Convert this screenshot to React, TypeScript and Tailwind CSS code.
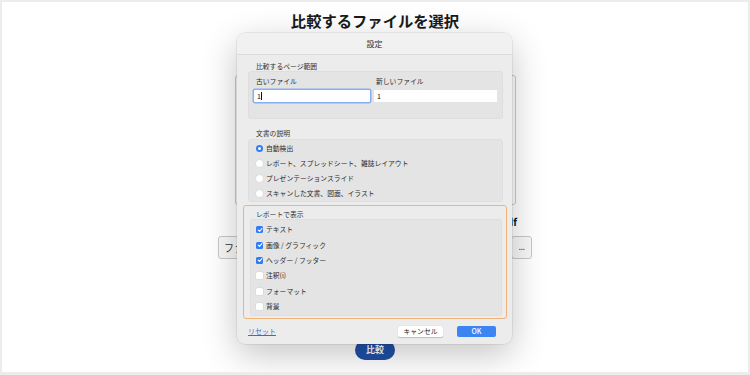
import React from "react";

const F = "[font-family:'Noto_Sans_CJK_JP','Noto_Sans',sans-serif]";

function Radio({ on, label }: { on?: boolean; label: string }) {
  return (
    <div className="flex h-[15px] items-center pl-[7px]">
      {on ? (
        <span className="flex h-[7px] w-[7px] items-center justify-center rounded-full bg-[#2f7cf6]">
          <span className="h-[2.5px] w-[2.5px] rounded-full bg-white" />
        </span>
      ) : (
        <span className="h-[7px] w-[7px] rounded-full bg-white shadow-[0_0_0_0.5px_#d4d4d4]" />
      )}
      <span className="ml-[3px] text-[6.8px] leading-[9px] text-[#2a2a2a]">{label}</span>
    </div>
  );
}

function Check({ on, label }: { on?: boolean; label: string }) {
  return (
    <div className="flex h-[15.4px] items-center pl-[5px]">
      {on ? (
        <span className="flex h-[7px] w-[7px] items-center justify-center rounded-[1.5px] bg-[#2f7cf6]">
          <svg width="6" height="6" viewBox="0 0 10 10">
            <path d="M2 5.2 L4.2 7.4 L8.2 2.6" fill="none" stroke="white" strokeWidth="1.8" strokeLinecap="round" strokeLinejoin="round" />
          </svg>
        </span>
      ) : (
        <span className="h-[7px] w-[7px] rounded-[1.5px] bg-white shadow-[0_0_0_0.5px_#d4d4d4]" />
      )}
      <span className="ml-[3px] text-[6.8px] leading-[9px] text-[#2a2a2a]">{label}</span>
    </div>
  );
}

export default function App() {
  return (
    <div className={`relative h-[375px] w-[750px] overflow-hidden border-2 border-b-[3px] border-[#ececec] bg-white ${F}`}>
      {/* background page */}
      <div className="flex flex-col items-center">
        <h1 className="mt-[8px] text-[15.3px] font-bold leading-[20px] text-[#1a1a1a]">比較するファイルを選択</h1>
        <div className="mt-[45px] h-[130px] w-[281px] rounded-[3px] border border-[#c9c9c9] bg-white" />
        <div className="mt-[11px] w-[284px] text-right text-[10px] font-bold leading-[12px] text-[#111]">比較対象.pdf</div>
        <div className="mt-[8px] flex w-[314px] justify-between">
          <div className="flex h-[23px] w-[90px] items-center rounded-[3px] border border-[#c8c8c8] bg-[#f8f8f8] pl-[5px] text-[10px] text-[#333]">ファイル</div>
          <div className="flex h-[23px] w-[21px] items-center justify-center rounded-[3px] border border-[#c8c8c8] bg-[#f8f8f8] pb-[2px] text-[9px] leading-none tracking-[-0.5px] text-[#555]">...</div>
        </div>
        <div className="mt-[81px] flex h-[20px] w-[40px] items-center justify-center rounded-full bg-[#1f50a6] text-[9px] font-bold text-white">比較</div>
      </div>

      {/* dialog */}
      <div className="absolute left-[235px] top-[31px] flex h-[311px] w-[275px] flex-col rounded-[8px] bg-[#ececec] shadow-[0_10px_35px_rgba(0,0,0,0.24),0_0_0_0.5px_rgba(0,0,0,0.12)]">
        <div className="flex h-[22px] items-center justify-center rounded-t-[8px] border-b border-[#dcdcdc] bg-[#f1f1f1] text-[8px] text-[#333]">設定</div>
        <div className="flex flex-1 flex-col pl-[6px] pr-[5px]">
          <div className="pl-[5px] pr-[4px]">
            <div className="mt-[7px] pl-[8px] text-[6.8px] leading-[9px] text-[#333]">比較するページ範囲</div>
            <div className="h-[48px] rounded-[3px] border border-[#dedede] bg-[#e4e4e4] pl-[5px] pt-[5px]">
              <div className="grid grid-cols-[116px_123px] gap-x-[4px]">
                <div className="pl-[2px] text-[6.8px] leading-[8px] text-[#2a2a2a]">古いファイル</div>
                <div className="pl-[2px] text-[6.8px] leading-[8px] text-[#2a2a2a]">新しいファイル</div>
                <div className="mt-[5px] flex h-[12px] items-center rounded-[1px] bg-white pl-[3px] text-[7px] text-[#111] shadow-[0_0_0_1.5px_#86aef0]">
                  1<span className="ml-[0.5px] h-[8px] w-[0.8px] bg-[#111]" />
                </div>
                <div className="mt-[5px] flex h-[12px] items-center bg-white pl-[3px] text-[7px] text-[#111]">1</div>
              </div>
            </div>
            <div className="mt-[10px] pl-[8px] text-[6.8px] leading-[9px] text-[#333]">文書の説明</div>
            <div className="mt-[1px] h-[63px] rounded-[3px] border border-[#dedede] bg-[#e4e4e4] pt-[1px]">
              <Radio on label="自動検出" />
              <Radio label="レポート、スプレッドシート、雑誌レイアウト" />
              <Radio label="プレゼンテーションスライド" />
              <Radio label="スキャンした文書、図面、イラスト" />
            </div>
          </div>
          <div className="mt-[3px] rounded-[3px] border border-[#f2b37a] pb-[2px] pl-[6px] pr-[4px]">
            <div className="pl-[6px] pt-[4px] text-[6.8px] leading-[9px] text-[#333]">レポートで表示</div>
            <div className="h-[97px] rounded-[3px] border border-[#dedede] bg-[#e4e4e4] pt-[2px]">
              <Check on label="テキスト" />
              <Check on label="画像 / グラフィック" />
              <Check on label="ヘッダー / フッター" />
              <Check label="注釈(i)" />
              <Check label="フォーマット" />
              <Check label="背景" />
            </div>
          </div>
          <div className="flex flex-1 items-center pb-[1px] pl-[5px] pr-[11px]">
            <span className="text-[7px] leading-[9px] text-[#2f6fd8] underline">リセット</span>
            <div className="ml-auto flex items-center gap-[14px]">
              <div className="flex h-[11px] w-[45px] items-center justify-center rounded-[2px] bg-white text-[6.8px] text-[#222] shadow-[0_0.5px_1px_rgba(0,0,0,0.2)]">キャンセル</div>
              <div className="flex h-[11px] w-[39px] items-center justify-center rounded-[2px] bg-[#3b85f3] text-[7px] font-medium text-white">OK</div>
            </div>
          </div>
        </div>
      </div>
    </div>
  );
}
